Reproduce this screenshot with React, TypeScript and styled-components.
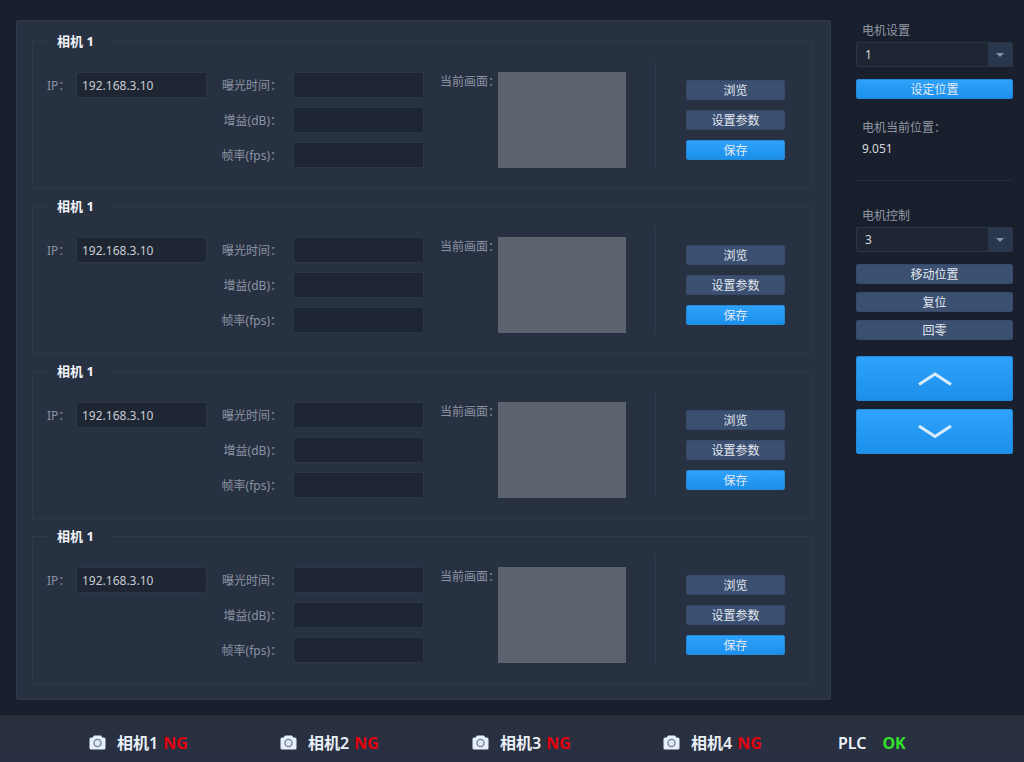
import React, { useId, useState } from "react";
import styled, { createGlobalStyle } from "styled-components";

const GlobalStyle = createGlobalStyle`
  * { box-sizing: border-box; }
  body {
    margin: 0;
    background: #191f2c;
    color: #d5d8de;
    font: 12px/20px "Noto Sans", "Noto Sans CJK SC", sans-serif;
  }
  button, input, select { font: inherit; color: inherit; }
`;

const Page = styled.div`
  min-height: 100vh;
  display: flex;
  flex-direction: column;
`;

const Main = styled.main`
  flex: 1;
  display: flex;
  align-items: flex-start;
  gap: 25px;
  padding: 20px 11px 15px 16px;
`;

const CameraPanel = styled.section`
  flex: 1;
  min-width: 0;
  display: flex;
  flex-direction: column;
  gap: 7px;
  padding: 10px 18px 15px 15px;
  background: #283142;
  border: 1px solid #2e3b4c;
  border-radius: 2px;
`;

const CameraGroup = styled.fieldset`
  min-width: 0;
  margin: 0;
  padding: 10px 26px 20px 14px;
  border: 1px solid #2d3a4a;
`;

const GroupTitle = styled.legend`
  margin-left: 2px;
  padding: 0 16px 0 8px;
  font-size: 13px;
  font-weight: 700;
  color: #f2f4f7;
`;

const CameraRow = styled.div`
  display: grid;
  grid-template-columns: 160fr 201fr 186fr 143fr;
  gap: 16px;
`;

const AddressCell = styled.div`
  display: flex;
  align-items: flex-start;
  padding-top: 11px;
`;

const FieldLabel = styled.label`
  flex: none;
  height: 26px;
  white-space: nowrap;
  line-height: 28px;
  color: #8b93a3;
`;

const AddressLabel = styled(FieldLabel)`
  width: 29px;
`;

const TextBox = styled.input`
  width: 100%;
  min-width: 0;
  height: 26px;
  padding: 0 5px;
  background: #1e2634;
  border: 1px solid #2b3748;
  border-radius: 2px;
  outline: none;
  color: #c9ccd2;
`;

const ParamCell = styled.div`
  display: grid;
  grid-template-columns: 59px 1fr;
  column-gap: 11px;
  row-gap: 9px;
  padding-top: 11px;

  ${FieldLabel} {
    justify-self: end;
  }
`;

const ViewCell = styled.div`
  display: flex;
  align-items: flex-start;
  padding-top: 11px;
`;

const ViewLabel = styled.span`
  flex: none;
  width: 58px;
  white-space: nowrap;
  color: #8b93a3;
`;

const Preview = styled.div`
  flex: 1;
  height: 96px;
  background: #5c626e;
`;

const Actions = styled.div`
  display: flex;
  flex-direction: column;
  gap: 10px;
  margin-left: 13px;
  padding: 19px 0 0 30px;
  border-left: 1px solid #2f3b4c;
`;

const Button = styled.button<{ $primary?: boolean; $tall?: boolean }>`
  display: flex;
  align-items: center;
  justify-content: center;
  width: 100%;
  height: ${(p) => (p.$tall ? 45 : 20)}px;
  padding: ${(p) => (p.$tall ? 0 : 2)}px 0 0;
  color: #e4e9f1;
  background: ${(p) => (p.$primary ? "linear-gradient(#2fa2fb, #1b8fea)" : "#3b4f70")};
  border: 1px solid ${(p) => (p.$primary ? "#2489d9" : "#384a68")};
  border-radius: 2px;
  cursor: pointer;
`;

const Sidebar = styled.aside`
  flex: none;
  width: 157px;
`;

const SideLabel = styled.label`
  display: block;
  padding: 1px 0 1px 6px;
  color: #9299a6;
`;

const Reading = styled.dl`
  margin: 19px 0 21px;
  padding-left: 6px;
  color: #9299a6;
`;

const ReadingValue = styled.dd`
  margin: 1px 0 0;
  color: #d5d8de;
`;

const Divider = styled.hr`
  height: 1px;
  margin: 0 0 24px;
  border: 0;
  background: #262e3b;
`;

const SelectBox = styled.div`
  position: relative;
  height: 25px;
  margin-bottom: 12px;
`;

const NativeSelect = styled.select`
  appearance: none;
  width: 100%;
  height: 100%;
  padding: 0 28px 0 8px;
  background: #1e2634;
  border: 1px solid #2a3547;
  border-radius: 2px;
  outline: none;
`;

const SelectArrow = styled.span`
  position: absolute;
  top: 1px;
  right: 1px;
  bottom: 1px;
  width: 24px;
  display: flex;
  align-items: center;
  justify-content: center;
  background: #2a374c;
  pointer-events: none;
`;

const ButtonStack = styled.div`
  display: flex;
  flex-direction: column;
  gap: 8px;
  margin-bottom: 16px;
`;

const StatusBar = styled.footer`
  display: grid;
  grid-template-columns: 191fr 192fr 191fr 175fr 186fr;
  align-items: center;
  height: 47px;
  padding: 8px 0 0 89px;
  background: linear-gradient(#28303c, #2a3044);
  font-size: 16px;
  font-weight: 700;
`;

const StatusItem = styled.div`
  display: flex;
  align-items: center;
  white-space: nowrap;
  color: #eaf0f8;
`;

const StatusName = styled.span<{ $gap: number }>`
  margin-right: ${(p) => p.$gap}px;
  font-weight: 600;
`;

const StatusValue = styled.span<{ $ok?: boolean }>`
  color: ${(p) => (p.$ok ? "#35e02a" : "#e3000f")};
`;

const CameraGlyph = styled.svg`
  flex: none;
  margin-right: 11px;
`;

function CameraIcon() {
  return (
    <CameraGlyph width="17" height="15" viewBox="0 0 17 15" aria-hidden="true">
      <path
        d="M5 .5h7l1.3 2H15a1.5 1.5 0 0 1 1.5 1.5v9a1.5 1.5 0 0 1-1.5 1.5H2A1.5 1.5 0 0 1 .5 13V4A1.5 1.5 0 0 1 2 2.5h1.7z"
        fill="#e6eefb"
      />
      <circle cx="8.5" cy="8" r="3.6" fill="#dbe5f4" stroke="#71829f" strokeWidth="1.3" />
    </CameraGlyph>
  );
}

function Chevron({ down }: { down?: boolean }) {
  return (
    <svg width="36" height="16" viewBox="0 0 36 16" fill="none" aria-hidden="true">
      <path
        d={down ? "M2 2L18 12.5L34 2" : "M2 13.5L18 3L34 13.5"}
        stroke="#d8ecfe"
        strokeWidth="3"
      />
    </svg>
  );
}

function CameraSettings({ title }: { title: string }) {
  const id = useId();
  const [address, setAddress] = useState("192.168.3.10");
  const params = ["曝光时间：", "增益(dB)：", "帧率(fps)："];
  return (
    <CameraGroup>
      <GroupTitle>{title}</GroupTitle>
      <CameraRow>
        <AddressCell>
          <AddressLabel htmlFor={`${id}-ip`}>IP：</AddressLabel>
          <TextBox
            id={`${id}-ip`}
            value={address}
            onChange={(e) => setAddress(e.target.value)}
          />
        </AddressCell>
        <ParamCell>
          {params.map((label, i) => (
            <React.Fragment key={label}>
              <FieldLabel htmlFor={`${id}-p${i}`}>{label}</FieldLabel>
              <TextBox id={`${id}-p${i}`} />
            </React.Fragment>
          ))}
        </ParamCell>
        <ViewCell>
          <ViewLabel>当前画面：</ViewLabel>
          <Preview />
        </ViewCell>
        <Actions>
          <Button type="button">浏览</Button>
          <Button type="button">设置参数</Button>
          <Button type="button" $primary>保存</Button>
        </Actions>
      </CameraRow>
    </CameraGroup>
  );
}

function MotorSelect({ label, initial }: { label: string; initial: string }) {
  const id = useId();
  const [value, setValue] = useState(initial);
  return (
    <>
      <SideLabel htmlFor={id}>{label}</SideLabel>
      <SelectBox>
        <NativeSelect id={id} value={value} onChange={(e) => setValue(e.target.value)}>
          {["1", "2", "3", "4"].map((n) => (
            <option key={n}>{n}</option>
          ))}
        </NativeSelect>
        <SelectArrow>
          <svg width="8" height="4" viewBox="0 0 8 4" aria-hidden="true">
            <path d="M0 0h8L4 4z" fill="#8391b0" />
          </svg>
        </SelectArrow>
      </SelectBox>
    </>
  );
}

export default function App() {
  return (
    <Page>
      <GlobalStyle />
      <Main>
        <CameraPanel>
          {[1, 2, 3, 4].map((n) => (
            <CameraSettings key={n} title="相机 1" />
          ))}
        </CameraPanel>
        <Sidebar>
          <MotorSelect label="电机设置" initial="1" />
          <Button type="button" $primary>设定位置</Button>
          <Reading>
            <dt>电机当前位置：</dt>
            <ReadingValue>9.051</ReadingValue>
          </Reading>
          <Divider />
          <MotorSelect label="电机控制" initial="3" />
          <ButtonStack>
            <Button type="button">移动位置</Button>
            <Button type="button">复位</Button>
            <Button type="button">回零</Button>
          </ButtonStack>
          <ButtonStack>
            <Button type="button" $primary $tall aria-label="上移"><Chevron /></Button>
            <Button type="button" $primary $tall aria-label="下移"><Chevron down /></Button>
          </ButtonStack>
        </Sidebar>
      </Main>
      <StatusBar>
        {[1, 2, 3, 4].map((n) => (
          <StatusItem key={n}>
            <CameraIcon />
            <StatusName $gap={5}>相机{n}</StatusName>
            <StatusValue>NG</StatusValue>
          </StatusItem>
        ))}
        <StatusItem>
          <StatusName $gap={16}>PLC</StatusName>
          <StatusValue $ok>OK</StatusValue>
        </StatusItem>
      </StatusBar>
    </Page>
  );
}
